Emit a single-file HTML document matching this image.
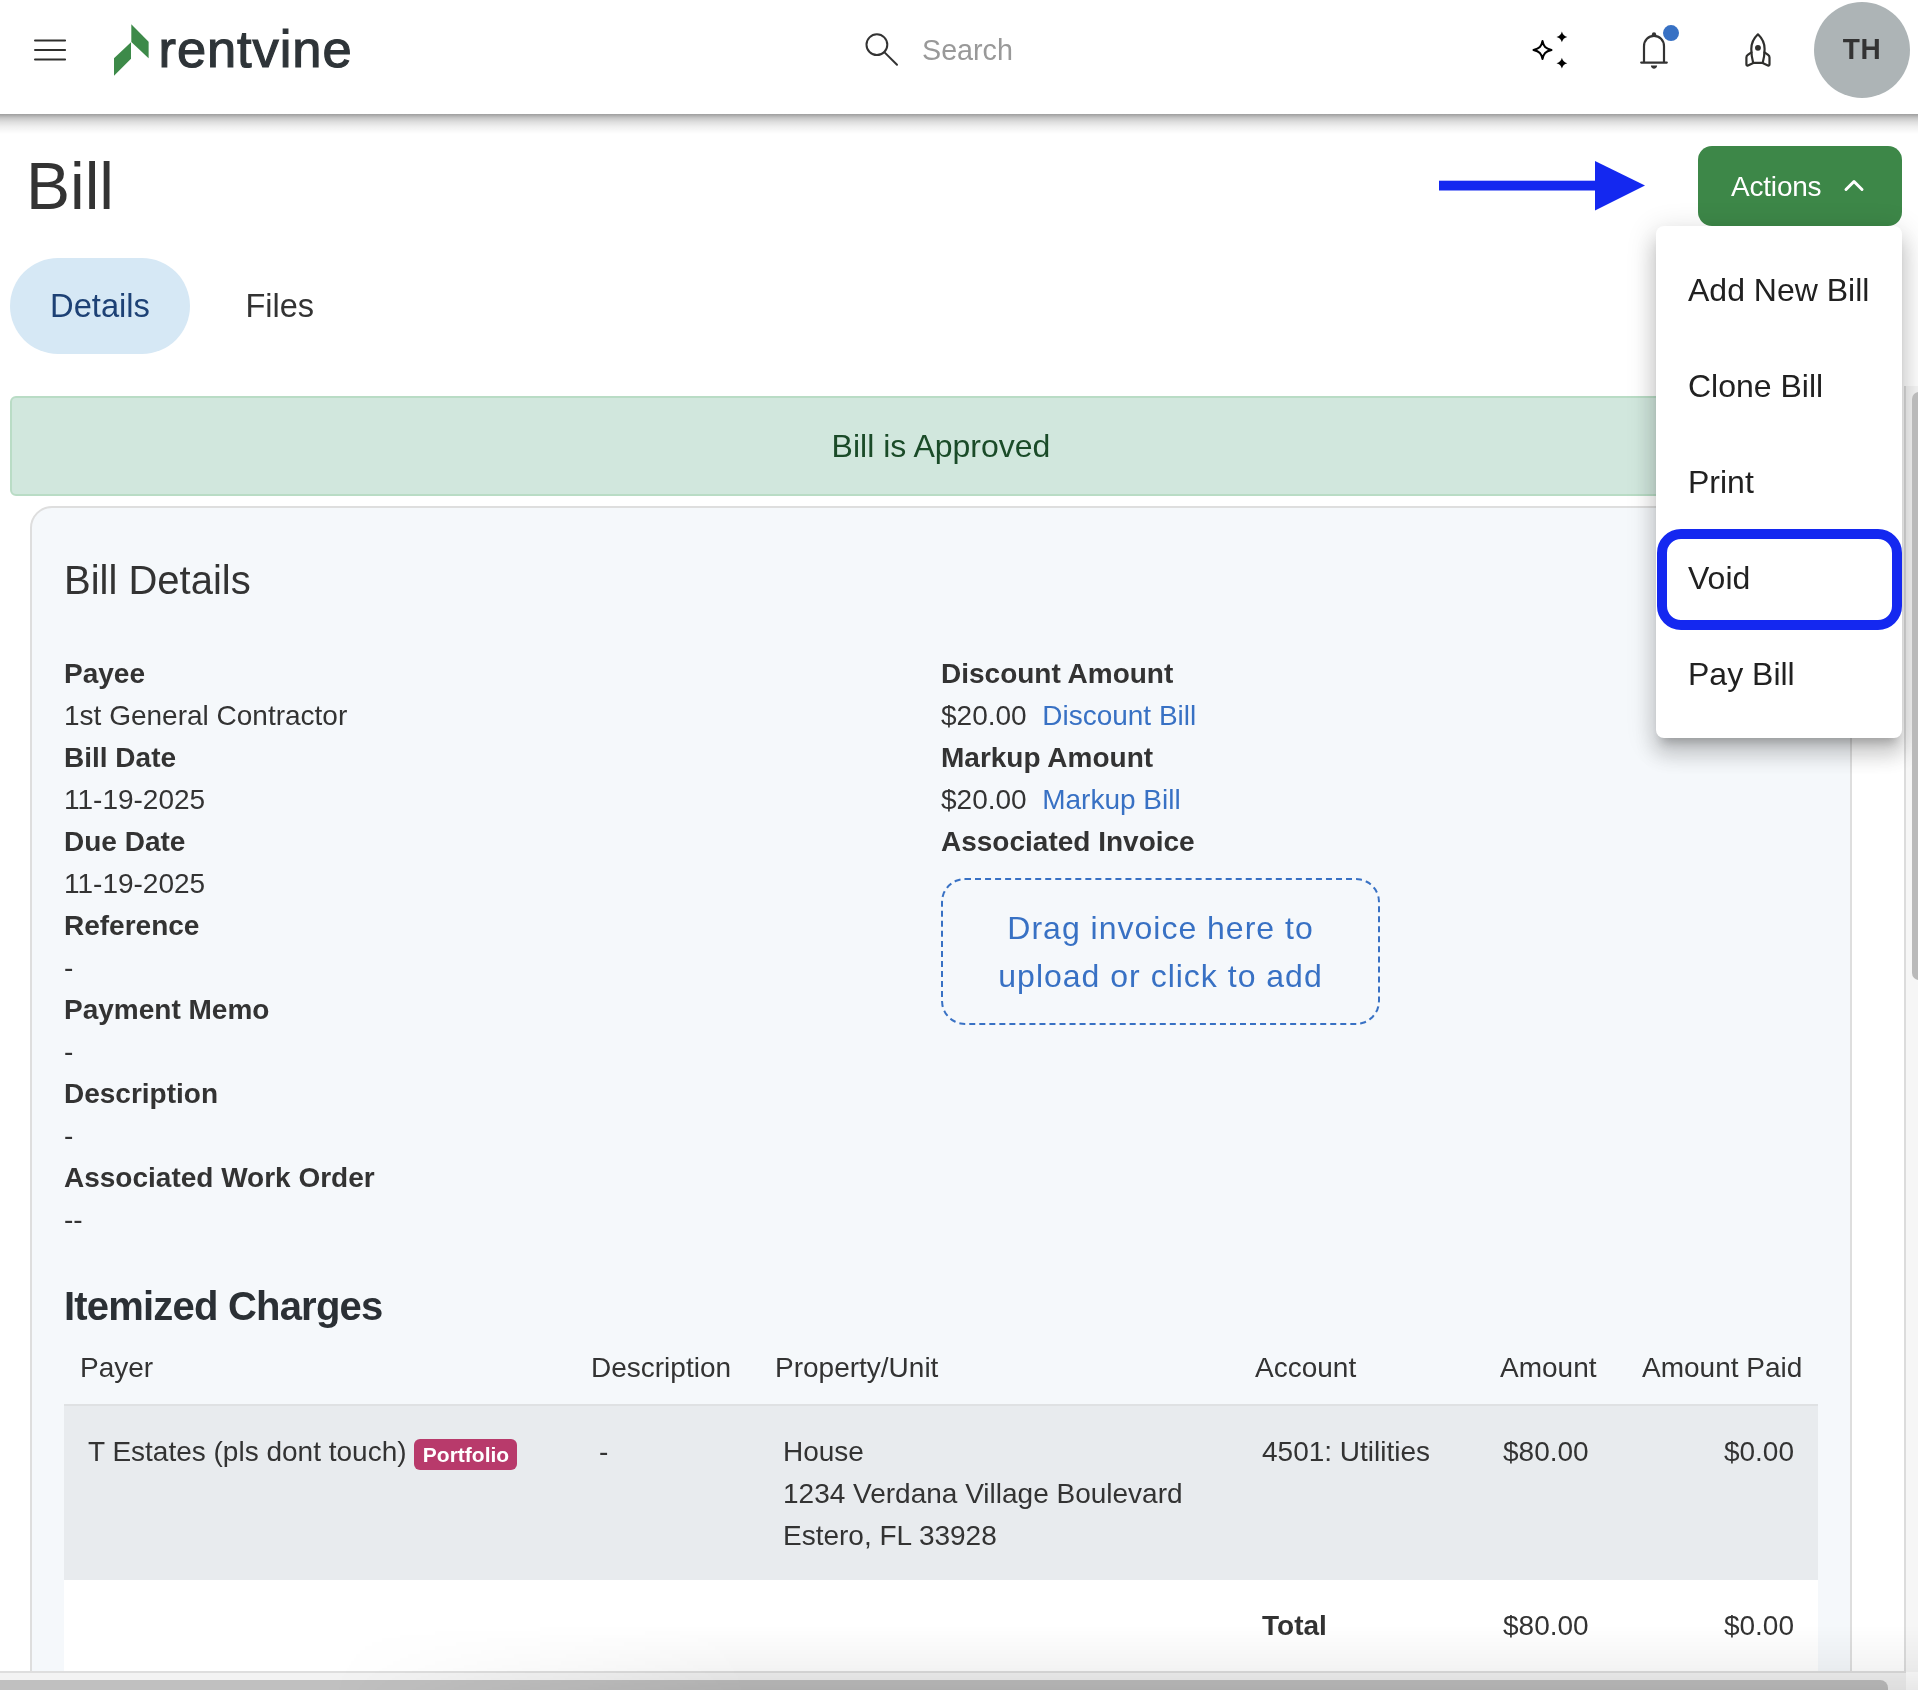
<!DOCTYPE html>
<html lang="en">
<head>
<meta charset="utf-8">
<title>Bill - Rentvine</title>
<style>
*{box-sizing:border-box;margin:0;padding:0}
html,body{width:1918px;height:1690px;overflow:hidden;background:#fff}
body{font-family:"Liberation Sans",Arial,Helvetica,sans-serif;color:#333;font-size:28px;position:relative;will-change:transform}
.abs{position:absolute}
/* header */
#hdr{position:absolute;left:0;top:0;width:1918px;height:114px;background:#fff;z-index:5}
#hshadow{position:absolute;left:0;top:114px;width:1918px;height:22px;z-index:4;background:linear-gradient(rgba(0,0,0,.38) 0,rgba(0,0,0,.22) 4px,rgba(0,0,0,.13) 8px,rgba(0,0,0,.06) 13px,rgba(0,0,0,0) 20px)}
.hb{position:absolute;left:34px;width:32px;height:2px;background:#333}
#logo-text{position:absolute;left:158.500px;top:18px;font-size:52.500px;line-height:62px;color:#2e3438;letter-spacing:.9px;-webkit-text-stroke:1.150px #2e3438}
#search{position:absolute;left:922px;top:33px;font-size:28.700px;line-height:34px;color:#999}
#avatar{position:absolute;left:1814px;top:2px;width:96px;height:96px;border-radius:50%;background:#adb4b6;color:#333;font-weight:bold;font-size:28px;line-height:96px;text-align:center;letter-spacing:.5px}
/* title */
#title{position:absolute;left:26px;top:148px;font-size:66px;line-height:76px;color:#333;font-weight:normal}
#actions{position:absolute;left:1698px;top:146px;width:204px;height:80px;border-radius:14px;background:#3d8748;color:#fff;font-size:28px;line-height:82px;padding-left:33px;letter-spacing:-.2px}
/* tabs */
#tab1{position:absolute;left:10px;top:258px;width:180px;height:96px;border-radius:48px;background:#d6e8f5;color:#1d4175;font-size:32.700px;line-height:96px;text-align:center}
#tab2{position:absolute;left:245.500px;top:258px;font-size:32.500px;line-height:96px;color:#333}
/* alert */
#alert{position:absolute;left:10px;top:396px;width:1862px;height:100px;border:2px solid #b9dcc5;border-radius:6px;background:#d1e7dd;color:#1a4b28;font-size:32px;line-height:96px;text-align:center}
/* card */
#card{position:absolute;left:30px;top:506px;width:1822px;height:1300px;border:2px solid #dedede;border-radius:22px;background:#f5f8fb}
#card h2{position:absolute;left:32px;top:47px;font-size:40px;line-height:50px;font-weight:normal;color:#333}
.col{position:absolute;top:145px;margin-left:-1px;font-size:28px;line-height:42px;color:#333}
.col b{display:block;font-weight:bold}
.col span.v{display:block}
a{color:#3871c4;text-decoration:none}
#drop{position:absolute;left:909px;top:370px;width:439px;height:147px;border:2px dashed #3871c4;border-radius:24px;color:#3871c4;font-size:32px;line-height:48px;text-align:center;letter-spacing:1px;padding-top:24px}
#card h3{position:absolute;left:32px;top:773px;font-size:40px;line-height:50px;font-weight:bold;color:#2b3035;letter-spacing:-.8px}
.th{position:absolute;top:839px;font-size:28px;line-height:42px;color:#333}
#row{position:absolute;left:32px;top:896px;width:1754px;height:176px;background:#e8ebee;border-top:2px solid #dfe1e3}
#tot{position:absolute;left:32px;top:1072px;width:1754px;height:100px;background:#fff}
.td{position:absolute;font-size:28px;line-height:42px;color:#333;white-space:nowrap}
.badge{display:inline-block;background:#b83a6b;color:#fff;font-weight:bold;font-size:21px;line-height:31px;height:31px;padding:0 8px 0 9px;border-radius:6px;vertical-align:-1px;margin-left:-.5px}
/* menu */
#menu{position:absolute;left:1656px;top:226px;width:245.500px;height:512px;background:#fff;border-radius:8px;box-shadow:0 10px 10px -6px rgba(0,0,0,.2),0 16px 20px 2px rgba(0,0,0,.14),0 6px 28px 4px rgba(0,0,0,.12);z-index:10}
#menu div{position:absolute;left:32px;font-size:32px;line-height:40px;color:#212121;white-space:nowrap}
#void{position:absolute;left:1657px;top:529px;width:245px;height:101px;border:10px solid #1428f0;border-radius:24px;z-index:11}
#bshadow{position:absolute;left:330px;top:1625px;width:1588px;height:65px;z-index:8;background:linear-gradient(to top,rgba(0,0,0,.09),rgba(0,0,0,.045) 35%,rgba(0,0,0,0));-webkit-mask-image:linear-gradient(to right,transparent,#000 420px);mask-image:linear-gradient(to right,transparent,#000 420px)}
/* scrollbars */
#vtrack{position:absolute;left:1904px;top:386px;width:14px;height:1286px;background:#f6f6f6;border-left:2px solid #dcdcdc;z-index:3}
#vthumb{position:absolute;left:1912px;top:392px;width:14px;height:588px;border-radius:7px;background:#bababa;z-index:12}
#htrack{position:absolute;left:0;top:1671px;width:1906px;height:19px;background:#f3f3f3;border-top:2px solid #dedede;z-index:6}
#hthumb{position:absolute;left:-20px;top:1680px;width:1908px;height:20px;border-radius:8px;background:#c0c0c0;z-index:7}
</style>
</head>
<body>
<div id="hdr">
  <svg class="abs" style="left:30px;top:30px" width="40" height="40" viewBox="30 30 40 40" stroke="#2f2f2d" stroke-width="2" stroke-linecap="round"><path d="M35 40.450 H65.100 M35 49.950 H65.100 M35 59.400 H65.100"/></svg>
  <svg class="abs" style="left:110px;top:20px" width="44" height="60" viewBox="110 20 44 60">
    <path d="M131.300 24.200 L148.600 41.700 V58.200 L131.300 42 Z" fill="#3d8a49"/>
    <path d="M131 42.300 V58.800 L114 75.800 V58.200 Z" fill="#3d8a49"/>
  </svg>
  <div id="logo-text">rentvine</div>
  <svg class="abs" style="left:862px;top:30px" width="40" height="40" viewBox="0 0 40 40" fill="none" stroke="#333" stroke-width="2" stroke-linecap="round">
    <circle cx="14.900" cy="14.700" r="10.400"/><path d="M22.300 22.100 L35 34.800"/>
  </svg>
  <div id="search">Search</div>
  <!-- sparkles -->
  <svg class="abs" style="left:1528px;top:28px" width="44" height="44" viewBox="0 0 44 44">
    <path d="M14.5 13 C15.6 18.6 17.4 20.6 23.5 22 C17.4 23.4 15.6 25.4 14.5 31 C13.4 25.4 11.6 23.4 5.5 22 C11.6 20.6 13.4 18.6 14.5 13 Z" fill="none" stroke="#000" stroke-width="2" stroke-linejoin="round"/>
    <path d="M33.9 3.5 Q34.9 7.9 39.3 8.9 Q34.9 9.9 33.9 14.3 Q32.9 9.9 28.5 8.9 Q32.9 7.9 33.9 3.5 Z" fill="#000"/>
    <path d="M33.9 29.800000000000004 Q34.9 34.2 39.3 35.2 Q34.9 36.2 33.9 40.6 Q32.9 36.2 28.5 35.2 Q32.9 34.2 33.9 29.800000000000004 Z" fill="#000"/>
  </svg>
  <!-- bell -->
  <svg class="abs" style="left:1634px;top:20px" width="52" height="56" viewBox="0 0 52 56">
    <path d="M10 42.500 V26.300 C10 20.200 14.500 15.900 20 15.900 C25.500 15.900 30 20.200 30 26.300 V42.500" fill="none" stroke="#333" stroke-width="2.2"/>
    <path d="M7.200 42.600 H32.800" stroke="#333" stroke-width="2.2" fill="none" stroke-linecap="round"/>
    <circle cx="20" cy="14.300" r="2.100" fill="#333"/>
    <path d="M16.900 45.600 H23.100 C23.100 49.800 16.900 49.800 16.900 45.600 Z" fill="#333"/>
    <circle cx="37" cy="13.100" r="8" fill="#3871c4"/>
  </svg>
  <!-- rocket -->
  <svg class="abs" style="left:1738px;top:28px" width="40" height="44" viewBox="1738 28 40 44" fill="none" stroke="#2f2f2d" stroke-width="2.2" stroke-linejoin="round" stroke-linecap="round">
    <path d="M1757.950 34.300 C1753.500 38.500 1751.300 43.500 1751.300 49 C1751.300 54 1752 58.500 1753.200 62.950 H1762.700 C1763.900 58.500 1764.600 54 1764.600 49 C1764.600 43.500 1762.400 38.500 1757.950 34.300 Z"/>
    <path d="M1751.400 52.300 L1747.800 54.900 Q1746.400 55.900 1746.400 57.600 V64.300 Q1746.400 66 1748 65.400 L1753.300 63"/>
    <path d="M1764.500 52.300 L1768.100 54.900 Q1769.500 55.900 1769.500 57.600 V64.300 Q1769.500 66 1767.900 65.400 L1762.600 63"/>
    <circle cx="1757.950" cy="47.870" r="2.950" fill="#2f2f2d" stroke="none"/>
  </svg>
  <div id="avatar"><span style="display:inline-block;transform:scaleY(1.04);transform-origin:50% 63%">TH</span></div>
</div>

<div id="hshadow"></div>
<div id="title">Bill</div>

<!-- annotation arrow -->
<svg class="abs" style="left:1430px;top:150px" width="230" height="72" viewBox="0 0 230 72">
  <rect x="9" y="30.700" width="160" height="9.800" fill="#1428f0"/>
  <path d="M165 11 L215 35.500 L165 60.500 Z" fill="#1428f0"/>
</svg>

<div id="actions">Actions
  <svg class="abs" style="left:142.500px;top:27px" width="28" height="24" viewBox="0 0 28 24" fill="none" stroke="#fff" stroke-width="3" stroke-linecap="round" stroke-linejoin="round"><path d="M5 16.500 L13 8.500 L21 16.500"/></svg>
</div>

<div id="tab1">Details</div>
<div id="tab2">Files</div>

<div id="alert">Bill is Approved</div>

<div id="card">
  <h2>Bill Details</h2>
  <div class="col" style="left:33px">
    <b>Payee</b><span class="v">1st General Contractor</span>
    <b>Bill Date</b><span class="v">11-19-2025</span>
    <b>Due Date</b><span class="v">11-19-2025</span>
    <b>Reference</b><span class="v">-</span>
    <b>Payment Memo</b><span class="v">-</span>
    <b>Description</b><span class="v">-</span>
    <b>Associated Work Order</b><span class="v">--</span>
  </div>
  <div class="col" style="left:910px">
    <b>Discount Amount</b><span class="v">$20.00 &nbsp;<a>Discount Bill</a></span>
    <b>Markup Amount</b><span class="v">$20.00 &nbsp;<a>Markup Bill</a></span>
    <b>Associated Invoice</b>
  </div>
  <div id="drop">Drag invoice here to<br>upload or click to add</div>

  <h3>Itemized Charges</h3>
  <div class="th" style="left:48px">Payer</div>
  <div class="th" style="left:559px">Description</div>
  <div class="th" style="left:743px">Property/Unit</div>
  <div class="th" style="left:1223px">Account</div>
  <div class="th" style="left:1468px">Amount</div>
  <div class="th" style="left:1610px">Amount Paid</div>
  <div id="row"></div>
  <div id="tot"></div>
  <div class="td" style="left:56px;top:923px">T Estates (pls dont touch) <span class="badge">Portfolio</span></div>
  <div class="td" style="left:567px;top:923px">-</div>
  <div class="td" style="left:751px;top:923px">House<br>1234 Verdana Village Boulevard<br>Estero, FL 33928</div>
  <div class="td" style="left:1230px;top:923px">4501: Utilities</div>
  <div class="td" style="left:1471px;top:923px">$80.00</div>
  <div class="td" style="right:56px;top:923px">$0.00</div>
  <div class="td" style="left:1230px;top:1097px;font-weight:bold">Total</div>
  <div class="td" style="left:1471px;top:1097px">$80.00</div>
  <div class="td" style="right:56px;top:1097px">$0.00</div>
</div>

<div id="menu">
  <div style="top:44px">Add New Bill</div>
  <div style="top:140px">Clone Bill</div>
  <div style="top:236px">Print</div>
  <div style="top:332px">Void</div>
  <div style="top:428px">Pay Bill</div>
</div>
<div id="void"></div>

<div id="vtrack"></div>
<div id="vthumb"></div>
<div id="htrack"></div>
<div id="hthumb"></div>
<div id="bshadow"></div>
</body>
</html>
